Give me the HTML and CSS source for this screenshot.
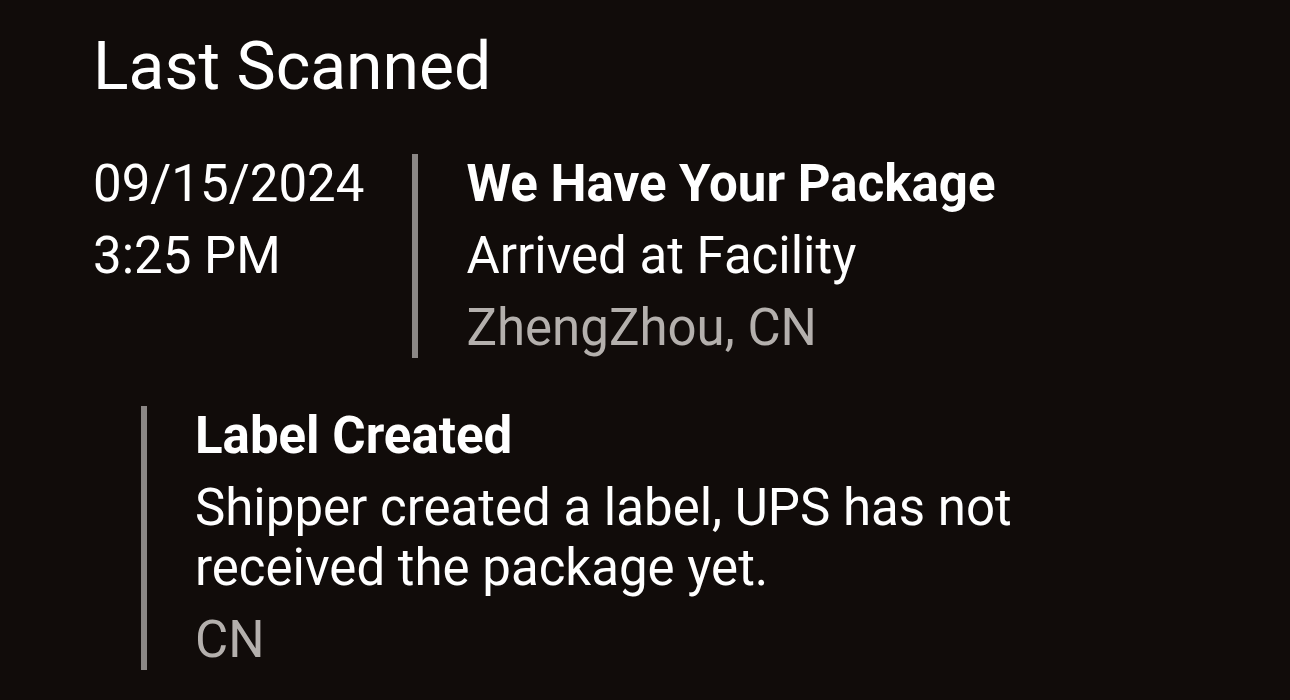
FILE: index.html
```html
<!DOCTYPE html>
<html>
<head>
    <title>Last Scanned</title>
    <meta name="viewport" content="width=device-width, initial-scale=1">
    <link rel="stylesheet" href="styles.css">
</head>
<body>

    <main class="tracking">
        <h1 class="tracking-title">Last Scanned</h1>

        <section class="scan scan-latest">
            <div class="scan-when">
                <p>09/15/2024</p>
                <p>3:25 PM</p>
            </div>
            <div class="scan-detail">
                <p class="scan-status">We Have Your Package</p>
                <p>Arrived at Facility</p>
                <p class="scan-place">ZhengZhou, CN</p>
            </div>
        </section>

        <section class="scan scan-earlier">
            <div class="scan-detail">
                <p class="scan-status">Label Created</p>
                <p>Shipper created a label, UPS has not received the package yet.</p>
                <p class="scan-place">CN</p>
            </div>
        </section>
    </main>

</body>
</html>
```

FILE: styles.css
```css
html, body {
    margin: 0;
}

body {
    background-color: #110c0a;
    color: #ffffff;
    font-family: Roboto, 'Noto Sans', sans-serif;
    height: 700px;
    overflow: hidden;
}

.tracking {
    padding: 34px 0 0 93px;
}

.tracking-title {
    font-size: 66px;
    font-weight: 400;
    line-height: 66px;
    margin: 0 0 54px 0;
}

p {
    margin: 0;
}

.scan {
    display: flex;
    font-size: 51px;
    line-height: 60px;
}

.scan p + p {
    margin-top: 12px;
}

.scan-when {
    width: 272px;
    margin-right: 48px;
}

.scan-detail {
    border-left: 6px solid #8b8785;
    padding-left: 48px;
    width: 830px;
}

.scan-status {
    font-weight: 700;
}

.scan-place {
    color: #b4b0ad;
}

.scan-earlier {
    margin: 48px 0 0 48px;
}
```
